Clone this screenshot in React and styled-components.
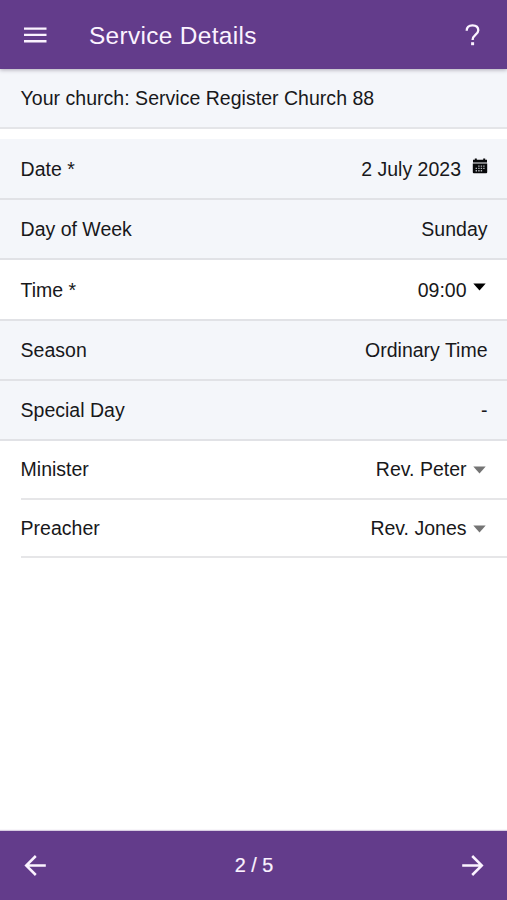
import React from "react";
import styled, { createGlobalStyle } from "styled-components";

const GlobalStyle = createGlobalStyle`
  * { box-sizing: border-box; }
  html, body, #root { height: 100%; }
  body {
    margin: 0;
    background: #fff;
    font-family: "Liberation Sans", Arial, sans-serif;
    font-size: 19.5px;
    color: #18181a;
  }
`;

const Page = styled.div`
  display: flex;
  flex-direction: column;
  width: 507px;
  height: 900px;
  overflow: hidden;
`;

const Bar = styled.header`
  flex: none;
  display: flex;
  align-items: center;
  height: 69px;
  padding: 1px 20.5px 0 21px;
  background: #633c8b;
  color: #fbf3ff;
`;

const TopBar = styled(Bar)`
  z-index: 1;
  box-shadow: 0 1px 4px rgba(50, 35, 65, 0.36);
`;

const BottomBar = styled(Bar).attrs({ as: "footer" })`
  justify-content: space-between;
  margin-top: auto;
  padding-top: 0;
  padding-right: 20px;
  box-shadow: 0 -1px 1px rgba(99, 60, 139, 0.25);
`;

const IconButton = styled.button`
  display: grid;
  place-items: center;
  width: 28px;
  height: 40px;
  padding: 0;
  border: 0;
  background: none;
  color: inherit;
`;

const Title = styled.h1`
  flex: 1;
  margin: 2px 0 0 40px;
  font-size: 24.4px;
  font-weight: 400;
  line-height: 30px;
  letter-spacing: 0.34px;
`;

const PageCount = styled.span`
  font-size: 19.8px;
  -webkit-text-stroke: 0.2px currentColor;
`;

const Banner = styled.div`
  flex: none;
  height: 60px;
  margin-bottom: 10px;
  padding: 0 20.6px;
  border-bottom: 2px solid #e4e5e8;
  background: #f4f6fa;
  line-height: 59px;
  letter-spacing: 0.025px;
`;

const Row = styled.div`
  flex: none;
  display: flex;
  justify-content: space-between;
  height: ${(p) => p.$height}px;
  margin-left: ${(p) => (p.$inset ? 20.6 : 0)}px;
  padding: 0 19.5px 0 ${(p) => (p.$inset ? 0 : 20.6)}px;
  border-bottom: 2px solid ${(p) => (p.$inset ? "#e6e6e8" : "#e1e2e6")};
  background: ${(p) => (p.$locked ? "#f4f6fa" : "#fff")};
  line-height: ${(p) => p.$line}px;
`;

const Value = styled.span`
  display: flex;
`;

const CalendarGlyph = styled.svg`
  width: 16px;
  height: 16px;
  margin: 19px 0 0 10.5px;
`;

const Caret = styled.svg`
  width: 13px;
  height: 8px;
  margin: ${(p) => p.$top}px 2px 0 6px;
  fill: ${(p) => p.$color};
`;

const MenuIcon = () => (
  <svg width="28" height="20" viewBox="0 0 28 20" fill="currentColor">
    <path d="M3 2.4h22.5v2.4H3zM3 8.7h22.5v2.4H3zM3 15h22.5v2.4H3z" />
  </svg>
);

const HelpIcon = () => (
  <svg width="20" height="26" viewBox="0 0 20 26" fill="none" stroke="currentColor" strokeWidth="2.3">
    <path d="M3.7 8.7c0-3.5 2.3-5.4 5.8-5.4s5.8 1.9 5.8 5c0 4.4-5.7 4.4-5.7 9.6" />
    <path d="M8.1 21.7h3" strokeWidth="3" />
  </svg>
);

const ArrowIcon = ({ forward }) => (
  <svg width="28" height="24" viewBox="0 0 28 24" fill="none" stroke="currentColor" strokeWidth="2.5">
    <path
      d={forward ? "M3.2 11.5h19.5M13.2 2l9.6 9.5-9.6 9.5" : "M24.8 11.5H5.3M14.8 2l-9.6 9.5 9.6 9.5"}
    />
  </svg>
);

const CalendarIcon = () => (
  <CalendarGlyph viewBox="0 0 16 16">
    <path d="M1 1.8h1.8V.6h2v1.2h6.4V.6h2v1.2H15v2.8H1zM.8 5.4h14.4v8.8a1 1 0 0 1-1 1H1.8a1 1 0 0 1-1-1z" fill="#08090b" />
    <path
      d="M6.2 7.4h1.4v1.4H6.2zM8.7 7.4h1.4v1.4H8.7zM11.2 7.4h1.4v1.4h-1.4zM3.6 9.7H5v1.4H3.6zM6.2 9.7h1.4v1.4H6.2zM8.7 9.7h1.4v1.4H8.7zM11.2 9.7h1.4v1.4h-1.4zM3.6 12H5v1.4H3.6zM6.2 12h1.4v1.4H6.2zM8.7 12h1.4v1.4H8.7z"
      fill="#b5b8bc"
    />
  </CalendarGlyph>
);

const carets = {
  dark: { $top: 23, $color: "#000" },
  muted: { $top: 25, $color: "#747474" },
};

const rows = [
  { label: "Date *", value: "2 July 2023", height: 61, line: 61, locked: true, calendar: true },
  { label: "Day of Week", value: "Sunday", height: 60, line: 59, locked: true },
  { label: "Time *", value: "09:00", height: 61, line: 61, caret: "dark" },
  { label: "Season", value: "Ordinary Time", height: 60, line: 59, locked: true },
  { label: "Special Day", value: "-", height: 60, line: 59, locked: true },
  { label: "Minister", value: "Rev. Peter", height: 59, line: 57, inset: true, caret: "muted" },
  { label: "Preacher", value: "Rev. Jones", height: 58, line: 57, inset: true, caret: "muted" },
];

export default function App() {
  return (
    <Page>
      <GlobalStyle />
      <TopBar>
        <IconButton aria-label="Menu"><MenuIcon /></IconButton>
        <Title>Service Details</Title>
        <IconButton aria-label="Help"><HelpIcon /></IconButton>
      </TopBar>
      <Banner>Your church: Service Register Church 88</Banner>
      {rows.map((row) => (
        <Row key={row.label} $height={row.height} $line={row.line} $locked={row.locked} $inset={row.inset}>
          <span>{row.label}</span>
          <Value>
            {row.value}
            {row.calendar && <CalendarIcon />}
            {row.caret && (
              <Caret viewBox="0 0 13 8" {...carets[row.caret]}>
                <path d="M.3.5h12.4L6.5 7.6z" />
              </Caret>
            )}
          </Value>
        </Row>
      ))}
      <BottomBar>
        <IconButton aria-label="Previous"><ArrowIcon /></IconButton>
        <PageCount>2 / 5</PageCount>
        <IconButton aria-label="Next"><ArrowIcon forward /></IconButton>
      </BottomBar>
    </Page>
  );
}
